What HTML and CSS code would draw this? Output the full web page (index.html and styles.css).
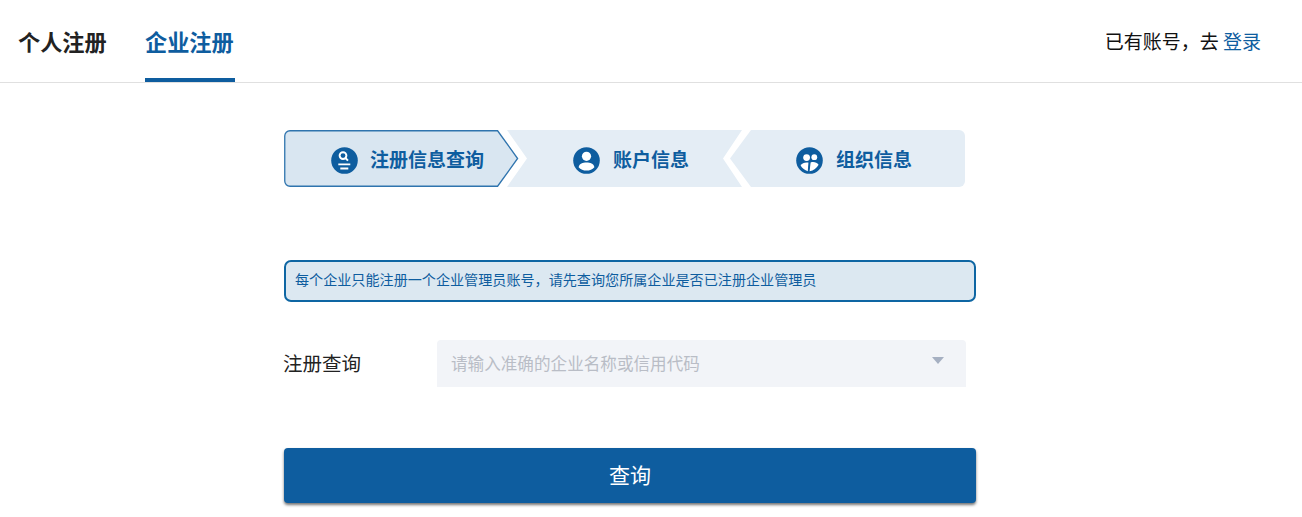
FILE: index.html
```html
<!DOCTYPE html>
<html lang="zh-CN">
<head>
<meta charset="utf-8">
<title>企业注册</title>
<link rel="stylesheet" href="styles.css">
</head>
<body>
<header class="topbar">
  <nav class="tabs">
    <a class="tab">个人注册</a>
    <a class="tab tab-active">企业注册</a>
  </nav>
  <p class="login-hint">已有账号，去 <a class="login-link">登录</a></p>
</header>
<main class="content">
  <ol class="steps">
    <li class="step step-first">
      <svg class="step-shape" width="235" height="57" viewBox="0 0 235 57"><path d="M6 .75H213.6L233.6 28.5L213.6 56.25H6A5.25 5.25 0 0 1 .75 51V6A5.25 5.25 0 0 1 6 .75Z" fill="#d9e6f1" stroke="#2f74ae" stroke-width="1.3"/></svg>
      <svg class="step-icon" width="27" height="27" viewBox="0 0 27 27"><circle cx="13.5" cy="13.5" r="13.3" fill="#0e5d9f"/><circle cx="12" cy="8.6" r="3.4" fill="none" stroke="#fff" stroke-width="1.9"/><path d="M14.4 11l2.6 2.6" stroke="#fff" stroke-width="2"/><path d="M7.3 16.4h12v1.8h-12zM9.3 20.6h8v1.8h-8z" fill="#fff"/></svg>
      <span class="step-label">注册信息查询</span>
    </li>
    <li class="step step-mid">
      <svg class="step-icon" width="27" height="27" viewBox="0 0 27 27"><circle cx="13.5" cy="13.5" r="13.3" fill="#0e5d9f"/><circle cx="13.5" cy="9.3" r="4.6" fill="#fff"/><path d="M5.6 20.2C6.6 16.6 9.5 15.6 13.5 15.6S20.4 16.6 21.4 20.2C19.4 22.6 16.6 23.6 13.5 23.6S7.6 22.6 5.6 20.2Z" fill="#fff"/></svg>
      <span class="step-label">账户信息</span>
    </li>
    <li class="step step-last">
      <svg class="step-icon" width="27" height="27" viewBox="0 0 27 27"><circle cx="13.5" cy="13.5" r="13.3" fill="#0e5d9f"/><circle cx="10.6" cy="10.6" r="3.4" fill="#fff"/><circle cx="18.3" cy="10.2" r="2.9" fill="#fff"/><path d="M4.6 18.6C6 16.2 9 15 12.4 15.6L11.8 24.2C8.8 23.4 6.2 21.4 4.6 18.6Z" fill="#fff"/><path d="M13.6 24.2L14.6 15.4C17.6 14.4 20.8 15.2 22.6 17.8C20.8 21.2 17.6 23.6 13.6 24.2Z" fill="#fff"/></svg>
      <span class="step-label">组织信息</span>
    </li>
  </ol>
  <div class="notice">每个企业只能注册一个企业管理员账号，请先查询您所属企业是否已注册企业管理员</div>
  <div class="field">
    <label class="field-label">注册查询</label>
    <div class="select">
      <span class="placeholder">请输入准确的企业名称或信用代码</span>
      <span class="caret"></span>
    </div>
  </div>
  <button class="submit" type="button">查询</button>
</main>
</body>
</html>
```

FILE: styles.css
```css
* { box-sizing: border-box; }
html, body { margin: 0; padding: 0; }
body {
  background: #fff;
  color: #222;
  font-family: "Noto Sans CJK SC", "Liberation Sans", sans-serif;
}
.topbar {
  height: 83px;
  border-bottom: 1px solid #e0e0e0;
  display: flex;
  justify-content: space-between;
  align-items: stretch;
  padding: 0 41px 0 18px;
}
.tabs { display: flex; gap: 37px; }
.tab {
  width: 90px;
  height: 82px;
  padding-top: 25px;
  font-size: 22.2px;
  line-height: 32px;
  font-weight: 700;
  color: #222;
}
.tab-active {
  color: #0e5d9f;
  border-bottom: 4px solid #0e5d9f;
}
.login-hint {
  margin: 0;
  padding-top: 27px;
  font-size: 19px;
  line-height: 28px;
  color: #111;
}
.login-link { color: #0e5d9f; }
.content {
  width: 976px;
  padding: 47px 0 14px 284px;
}
.steps {
  list-style: none;
  margin: 0;
  padding: 0;
  display: flex;
  width: 681px;
  height: 57px;
}
.step {
  position: relative;
  height: 57px;
  display: flex;
  align-items: center;
  gap: 13px;
}
.step-icon { position: relative; flex: none; margin-top: 3px; }
.step-label {
  position: relative;
  font-size: 19px;
  font-weight: 700;
  color: #0e5d9f;
  white-space: nowrap;
}
.step-first {
  width: 235px;
  padding-left: 47px;
  gap: 12px;
  flex: none;
}
.step-shape { position: absolute; left: 0; top: 0; }
.step-mid {
  width: 235px;
  flex: none;
  margin-left: -12px;
  padding-left: 66px;
  background: #e4edf5;
  clip-path: polygon(0 0, 100% 0, 216px 50%, 100% 100%, 0 100%, 20px 50%);
}
.step-last {
  width: 235px;
  flex: none;
  margin-left: -12px;
  padding-left: 66px;
  background: #e4edf5;
  border-radius: 0 6px 6px 0;
  clip-path: polygon(21px 0, 100% 0, 100% 100%, 21px 100%, 0 50%);
}
.notice {
  width: 692px;
  height: 42px;
  margin-top: 73px;
  padding: 0 9px;
  border: 2px solid #0e66a3;
  border-radius: 7px;
  background: #dce8f1;
  color: #0e5d9f;
  font-size: 14.1px;
  line-height: 34px;
  white-space: nowrap;
}
.field {
  display: flex;
  align-items: center;
  height: 47px;
  margin-top: 38px;
}
.field-label {
  width: 153px;
  margin-top: -3px;
  text-indent: -1px;
  font-size: 19.5px;
  color: #222;
}
.select {
  width: 529px;
  height: 47px;
  padding: 0 22px 0 14px;
  background: #f2f4f8;
  border-radius: 4px 4px 0 0;
  display: flex;
  justify-content: space-between;
  align-items: center;
}
.placeholder {
  margin-top: -2px;
  font-size: 16.6px;
  color: #b9bdc6;
  white-space: nowrap;
}
.caret {
  width: 0;
  height: 0;
  margin-top: -6px;
  border-left: 6px solid transparent;
  border-right: 6px solid transparent;
  border-top: 7px solid #a6b0c2;
}
.submit {
  display: block;
  width: 692px;
  height: 55px;
  margin-top: 61px;
  padding: 0 0 3px;
  border: 0;
  border-radius: 4px;
  background: #0e5d9f;
  color: #fff;
  font-family: inherit;
  font-size: 21px;
  box-shadow: 0 2px 3px rgba(0, 0, 0, .55);
}
```
